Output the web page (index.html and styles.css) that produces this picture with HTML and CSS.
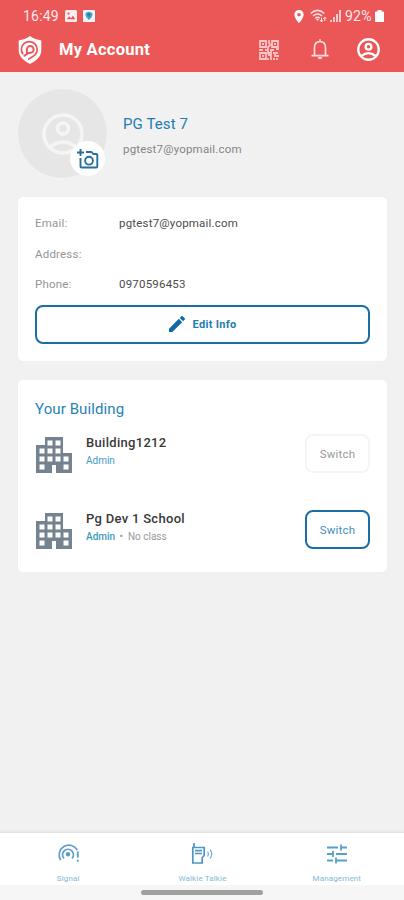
FILE: index.html
```html
<!DOCTYPE html>
<html lang="en">
<head>
<meta charset="utf-8">
<title>My Account</title>
<link rel="stylesheet" href="styles.css">
</head>
<body>
<div class="screen">
  <header class="header">
    <div class="status">
      <span class="clock">16:49</span>
      <svg class="status-photo" width="12" height="12" viewBox="0 0 12 12"><rect width="12" height="12" rx="1.5" fill="#ffecec"/><path d="M1.8 9.3 4.2 6.3 6 8.3 8 5.5l2.4 3.8z" fill="#eb5757"/><circle cx="3.6" cy="3.6" r="1.1" fill="#eb5757"/></svg>
      <svg class="status-app" width="12" height="12" viewBox="0 0 12 12"><rect width="12" height="12" rx=".6" fill="#f5f4f7"/><path d="M6 1.8c2 0 3.600.9 3.600 2.800C9.600 7 7.500 8.300 6 10.200 4.500 8.300 2.400 7 2.400 4.600 2.400 2.700 4 1.800 6 1.800z" fill="#4aa5c4"/><path d="M4 4.500h3.500M6 3v4" stroke="#326d91"/></svg>
      <span class="grow"></span>
      <svg class="pin" width="10" height="13" viewBox="0 0 10 14"><path fill="#fff" fill-rule="evenodd" d="M5 0a5 5 0 0 1 5 5c0 3.500-5 9-5 9S0 8.500 0 5a5 5 0 0 1 5-5zm0 3.200a1.900 1.900 0 1 0 0 3.800 1.900 1.900 0 0 0 0-3.800z"/></svg>
      <svg class="wifi" width="17" height="14" viewBox="0 0 17 14" fill="none" stroke="#ffdede" stroke-width="1.500"><path d="M.7 4.500Q7.500-1.700 14.300 4.500M3 7q4.500-4 9 0M5.300 9.300q2.200-2 4.400 0"/><path d="M7.500 12 5.800 9.800h3.400z" fill="#ffdede" stroke="none"/><path d="m10 11 1.500 2 1.500-2M11.500 8.500V13M13.300 10l1.500-2 1.500 2M14.800 8v4" stroke-width="1"/></svg>
      <svg class="bars" width="11" height="12" viewBox="0 0 11 12" fill="#ffc9c9"><path d="M0 10h2v2H0zM3 7h2v5H3zM6 4h2v8H6zM9 0h2v12H9z"/></svg>
      <span class="percent">92%</span>
      <svg width="9" height="12" viewBox="0 0 9 12"><path d="M2.500 0h4v1.500H8c.6 0 1 .4 1 1V11c0 .6-.4 1-1 1H1c-.6 0-1-.4-1-1V2.500c0-.6.400-1 1-1h1.500z" fill="#fff"/></svg>
    </div>
    <div class="appbar">
      <svg class="logo" width="24" height="28" viewBox="0 0 24 29"><path fill="#fff" d="M12 0c3.500 2.500 7.500 4 11.700 4.600v10.200C23.700 21.500 18 26 12 29 6 26 .3 21.500.3 14.800V4.600C4.500 4 8.500 2.500 12 0z"/><path d="M4.800 19A8.200 8.200 0 1 1 17 19.800L10 24.300" fill="none" stroke="#eb5757" stroke-width="1.800"/><path d="M5.500 20.800 8.800 18.600V13.800a3.500 3.500 0 1 1 3.500 3.600q-2 0-3.500 1.200" fill="none" stroke="#eb5757" stroke-width="2"/></svg>
      <h1 class="title">My Account</h1>
      <span class="grow"></span>
      <svg class="qr" width="20" height="20" viewBox="0 0 20 20" fill="none" stroke="#ffc5c5" stroke-width="1.800"><path d="M1 1h6v6H1zM13 1h6v6h-6zM1 13h6v6H1z"/><path d="M3 4h2M15 4h2M3 16h2M10 0v4M12 4 9 7v3M0 10h4M6 10h3v3h3v-3h3M17 9h3M9 15h3v5M14 13h2v3h4M14 19h2M18 12v2M18 18v2M9 18v2"/></svg>
      <svg class="bell" width="18" height="21" viewBox="0 0 18 21" fill="none" stroke="#ffdada" stroke-width="1.700"><path d="M3.500 16V8.500C3.500 5 5.500 2.700 9 2.700S14.500 5 14.500 8.500V16M.5 16.700h17M9 .3v2.500"/><path d="M6.800 18h4.400a2.200 2.200 0 0 1-4.400 0z" fill="#ffdada" stroke="none"/></svg>
      <svg class="account" width="23" height="23" viewBox="0 0 24 24" fill="none" stroke="#fff" stroke-width="2.400"><circle cx="12" cy="12" r="10.700"/><circle cx="12" cy="9.200" r="3"/><path d="M4.500 18.800Q12 12.800 19.500 18.800"/></svg>
    </div>
  </header>

  <main class="main">
    <section class="profile">
      <div class="avatar">
        <svg width="42" height="42" viewBox="0 0 42 42" fill="none" stroke="#f5f5f5" stroke-width="3.500"><circle cx="21" cy="21" r="19"/><circle cx="21" cy="15.500" r="5.600"/><path d="M8 34q13-10 26 0"/></svg>
        <span class="camera"><svg width="22" height="20" viewBox="0 0 22 20" fill="none" stroke="#286f9f" stroke-width="1.900" stroke-linejoin="round"><path d="M3.500 0v7M0 3.500h7M3.500 9v8.500q0 1 1 1h14.800q1 0 1-1V6q0-1-1-1h-3l-1.700-2H9"/><circle cx="12" cy="11.700" r="3.900"/></svg></span>
      </div>
      <div class="identity">
        <div class="name">PG Test 7</div>
        <div class="mail">pgtest7@yopmail.com</div>
      </div>
    </section>

    <section class="card info">
      <dl class="fields">
        <dt>Email:</dt><dd>pgtest7@yopmail.com</dd>
        <dt>Address:</dt><dd></dd>
        <dt>Phone:</dt><dd>0970596453</dd>
      </dl>
      <button class="edit"><svg width="16" height="16" viewBox="3 3 18 18"><path fill="#1269a5" d="M3 17.250V21h3.750L17.810 9.940l-3.750-3.750L3 17.250zM20.710 7.040a1 1 0 0 0 0-1.410l-2.340-2.340a1 1 0 0 0-1.410 0l-1.830 1.830 3.750 3.750 1.830-1.830z"/></svg><span>Edit Info</span></button>
    </section>

    <section class="card buildings">
      <h2 class="heading">Your Building</h2>
      <div class="building">
        <svg class="tower" width="36" height="36" viewBox="0 0 36 36"><path fill="#758390" fill-rule="evenodd" d="M9 0h18v16h9v20H20v-8h-4v8H0V8h9zM11.500 3.500v5h5v-5zm8 0v5h5v-5zM3.500 11.500v5h5v-5zm8 0v5h5v-5zm8 0v5h5v-5zM3.500 19.500v5h5v-5zm8 0v5h5v-5zm8 0v5h5v-5zm8 0v5h5v-5zM3.500 27.500v5h5v-5zm24 0v5h5v-5z"/></svg>
        <div class="details"><div class="bname">Building1212</div><div class="role">Admin</div></div>
        <button class="switch muted">Switch</button>
      </div>
      <div class="building">
        <svg class="tower" width="36" height="36" viewBox="0 0 36 36"><path fill="#758390" fill-rule="evenodd" d="M9 0h18v16h9v20H20v-8h-4v8H0V8h9zM11.500 3.500v5h5v-5zm8 0v5h5v-5zM3.500 11.500v5h5v-5zm8 0v5h5v-5zm8 0v5h5v-5zM3.500 19.500v5h5v-5zm8 0v5h5v-5zm8 0v5h5v-5zm8 0v5h5v-5zM3.500 27.500v5h5v-5zm24 0v5h5v-5z"/></svg>
        <div class="details"><div class="bname">Pg Dev 1 School</div><div class="role strong">Admin <span class="class">• &nbsp;No class</span></div></div>
        <button class="switch">Switch</button>
      </div>
    </section>
  </main>

  <nav class="tabs">
    <div class="tab"><svg width="24" height="24" viewBox="0 0 24 24" fill="none" stroke="#5d9fca" stroke-width="1.700"><path d="M4.500 18A9.700 9.700 0 1 1 21.300 8M8 16.500a5.500 5.500 0 1 1 8 0"/><circle cx="12" cy="12.200" r="1.400" fill="#4c94c4"/><path d="M21.800 9.500v6M21.800 17.800v2" stroke-width="1.900"/></svg><span>Signal</span></div>
    <div class="tab"><svg width="24" height="24" viewBox="0 0 24 24" fill="none" stroke="#4c96c3" stroke-width="1.700"><path d="M4 1v5M2.800 5.500h11.400v8l-2 2V21H2.800zM5 8.700h7M5 11.500h7"/><path d="M17.500 9.500q1.700 2.500 0 5M20 7.500q3.500 4.500 0 9" stroke="#7eb2d5" stroke-width="1.300"/></svg><span>Walkie Talkie</span></div>
    <div class="tab"><svg width="24" height="24" viewBox="0 0 24 24" fill="none" stroke="#56a1ca" stroke-width="1.800"><path d="M2 5.500h11M16 5.500h6M16 2.500v6M2 12h6M8 9v6M11 12h11M2 18.500h6M11 18.500h11M11 15.500v6"/></svg><span>Management</span></div>
  </nav>
  <div class="gesture"><span></span></div>
</div>
</body>
</html>
```

FILE: styles.css
```css
* { box-sizing: border-box; }
body { margin: 0; background: #f1f1f1; font-family: Roboto, sans-serif; color: #333; }
h1, h2, dl, dd { margin: 0; }
svg { display: block; flex: none; }
button { font-family: inherit; background: #fff; padding: 0; }
.screen { display: flex; flex-direction: column; height: 900px; overflow: hidden; }
.grow { flex: 1; }

.header { height: 72px; background: #eb5757; color: #fff; }
.status { display: flex; align-items: center; height: 32px; padding: 0 20px 0 23px; }
.clock { font-size: 14px; line-height: 16px; width: 36px; letter-spacing: .2px; color: #ffe9e9; }
.status-photo { margin-left: 6px; }
.status-app { margin-left: 6px; }
.pin { margin-right: 6px; }
.wifi { margin-right: 3px; }
.bars { margin-right: 4px; }
.percent { font-size: 14px; line-height: 16px; width: 30px; letter-spacing: .2px; color: #ffe9e9; }
.appbar { display: flex; align-items: center; height: 35px; padding: 0 24px 0 18px; }
.title { margin-left: 17px; font-size: 16.500px; line-height: 20px; font-weight: 700; letter-spacing: .25px; }
.bell { margin-left: 32px; }
.account { margin-left: 28px; margin-bottom: 1px; }

.main { flex: 1; padding: 17px 17px 0 18px; }
.profile { display: flex; align-items: center; height: 89px; }
.avatar { position: relative; display: flex; align-items: center; justify-content: center; width: 89px; height: 89px; border-radius: 50%; background: #e6e6e6; }
.camera { position: absolute; right: 2px; bottom: 2px; display: flex; align-items: center; justify-content: center; width: 35px; height: 35px; border-radius: 50%; background: #fff; }
.identity { margin-left: 16px; padding-top: 3px; }
.name { font-size: 15px; line-height: 20px; letter-spacing: .1px; color: #217db2; }
.mail { margin-top: 7px; font-size: 11.500px; line-height: 16px; letter-spacing: .18px; color: #858585; }

.card { background: #fff; border-radius: 5px; box-shadow: 0 0 3px rgba(0, 0, 0, .025); padding: 0 17px; }
.info { margin-top: 19px; height: 164px; padding-top: 11px; }
.fields { display: grid; grid-template-columns: 84px 1fr; grid-auto-rows: 30.500px; align-items: center; font-size: 11.500px; line-height: 16px; letter-spacing: .2px; }
.fields dt { color: #949494; }
.fields dd { color: #4c4c4c; }
.edit { display: flex; align-items: center; justify-content: center; gap: 8px; width: 100%; height: 39px; margin-top: 5px; border: 2px solid #1b6ea4; border-radius: 8px; font-size: 11px; letter-spacing: .3px; font-weight: 700; color: #217db2; }

.buildings { margin-top: 19px; height: 192px; padding-top: 18px; }
.heading { font-size: 15px; line-height: 22px; font-weight: 400; letter-spacing: .1px; color: #2884b5; }
.building { display: flex; align-items: flex-start; height: 76px; padding-top: 14px; }
.tower { margin: 3px 0 0 1px; }
.details { flex: 1; margin-left: 14px; }
.bname { font-size: 13px; line-height: 18px; font-weight: 500; letter-spacing: .3px; color: #383838; }
.role { font-size: 10px; line-height: 17px; color: #3d9abc; }
.role.strong { font-weight: 500; }
.class { margin-left: 2px; color: #999; font-weight: 400; }
.switch { width: 65px; height: 39px; border: 2px solid #1b6ea4; border-radius: 8px; font-size: 11.500px; letter-spacing: .15px; color: #3e8eba; }
.switch.muted { border-color: #f5f5f5; color: #999; }

.tabs { display: grid; grid-template-columns: repeat(3, 1fr); height: 53px; padding: 9px 0 0 1px; background: #fff; border-top: 1px solid #e3e3e3; box-shadow: 0 -1px 2px rgba(0, 0, 0, .05); }
.tab { display: flex; flex-direction: column; align-items: center; gap: 8px; font-size: 8px; line-height: 10px; letter-spacing: .15px; color: #83b9d5; }
.gesture { display: flex; justify-content: center; height: 15px; padding-top: 5px; background: #f6f6f6; }
.gesture span { width: 122px; height: 5px; border-radius: 3px; background: #a0a0a0; }
```
